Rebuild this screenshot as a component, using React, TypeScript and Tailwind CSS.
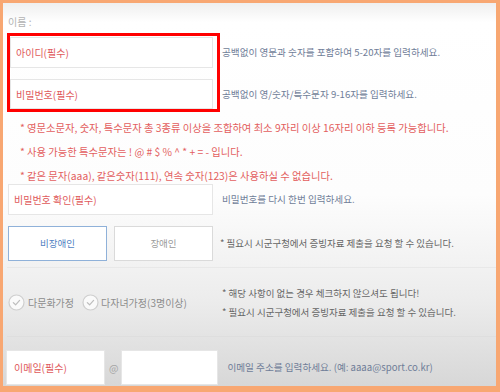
const font = "font-['Noto_Sans_CJK_KR','Noto_Sans',sans-serif]";

function CheckCircle() {
  return (
    <svg width="17" height="17" viewBox="0 0 17 17" className="shrink-0">
      <circle cx="8.5" cy="8.5" r="7.5" fill="#fafafa" stroke="#cfcfcf" strokeWidth="1.2" />
      <path d="M5.3 8.6 L7.6 10.8 L11.6 6.4" fill="none" stroke="#bdbdbd" strokeWidth="1.2" strokeLinecap="round" strokeLinejoin="round" />
    </svg>
  );
}

function Field({ label, className }: { label?: string; className: string }) {
  return (
    <div className={`flex items-center bg-white border border-[#e6e6e6] pl-[5px] ${className}`}>
      {label && <span className="text-[10px] text-[#e0595b]">{label}</span>}
    </div>
  );
}

export default function App() {
  return (
    <div className={`w-[500px] h-[392px] bg-[#f8a772] pt-[3px] pl-[3px] pr-[4px] pb-[6px] ${font}`}>
      <div className="h-full overflow-hidden bg-[linear-gradient(to_bottom,#efefef_0%,#ffffff_5%,#fdfdfd_50%,#ececec_78%,#d7d7d7_100%)] pl-[4px]">
        {/* name label */}
        <div className="pt-[13px] h-[30px] text-[10px] leading-[12px] text-[#b3b3b3] pl-[1px]">이름 :</div>

        {/* id / password, boxed in red */}
        <div className="flex">
          <div className="w-[213px] border-[3px] border-[#ff0000] pt-[1px] pr-[4px] flex flex-col gap-[11px]">
            <Field label="아이디(필수)" className="h-[31px]" />
            <Field label="비밀번호(필수)" className="h-[30px]" />
          </div>
          <div className="ml-[2px] pt-[4px] flex flex-col gap-[11px] text-[9.6px] text-[#6f7d98]">
            <div className="h-[31px] flex items-center">공백없이 영문과 숫자를 포함하여 5-20자를 입력하세요.</div>
            <div className="h-[30px] flex items-center">공백없이 영/숫자/특수문자 9-16자를 입력하세요.</div>
          </div>
        </div>

        {/* password rules */}
        <div className="mt-[10px] pl-[13px] flex flex-col gap-[12px] text-[10.3px] leading-[12px] text-[#e35f60]">
          <div>* 영문소문자, 숫자, 특수문자 총 3종류 이상을 조합하여 최소 9자리 이상 16자리 이하 등록 가능합니다.</div>
          <div>* 사용 가능한 특수문자는 ! @ # $ % ^ * + = - 입니다.</div>
          <div>* 같은 문자(aaa), 같은숫자(111), 연속 숫자(123)은 사용하실 수 없습니다.</div>
        </div>

        {/* password confirm */}
        <div className="mt-[2px] flex items-center">
          <Field label="비밀번호 확인(필수)" className="ml-[1px] w-[205px] h-[31px]" />
          <div className="ml-[9px] text-[9.6px] text-[#6f7d98]">비밀번호를 다시 한번 입력하세요.</div>
        </div>

        {/* disability */}
        <div className="mt-[11px] flex items-center">
          <div className="ml-[1px] w-[99px] h-[35px] border border-[#8fb1d9] bg-white flex items-center justify-center text-[9.5px] text-[#4f7fc2]">비장애인</div>
          <div className="ml-[7px] w-[99px] h-[35px] border border-[#dadada] bg-white flex items-center justify-center text-[9.5px] text-[#9a9a9a]">장애인</div>
          <div className="ml-[7px] text-[9.5px] text-[#666]">* 필요시 시군구청에서 증빙자료 제출을 요청 할 수 있습니다.</div>
        </div>

        <div className="mt-[6px] h-px bg-[#e8e8e8]" />

        {/* family options */}
        <div className="h-[68px] flex items-center">
          <div className="ml-[1px] w-[213px] flex items-center">
            <CheckCircle />
            <span className="ml-[3px] text-[10px] text-[#8c8c8c]">다문화가정</span>
            <span className="ml-[8px]"><CheckCircle /></span>
            <span className="ml-[2px] text-[10px] text-[#8c8c8c]">다자녀가정(3명이상)</span>
          </div>
          <div className="ml-[1px] flex flex-col gap-[7px] text-[9.5px] leading-[12px] text-[#666]">
            <div>* 해당 사항이 없는 경우 체크하지 않으셔도 됩니다!</div>
            <div>* 필요시 시군구청에서 증빙자료 제출을 요청 할 수 있습니다.</div>
          </div>
        </div>

        <div className="h-px bg-[#dedede]" />

        {/* email */}
        <div className="mt-[13px] flex items-center">
          <Field label="이메일(필수)" className="ml-[-1px] w-[99px] h-[35px] !pl-[7px]" />
          <span className="ml-[4px] text-[10px] text-[#a5a5a5]">@</span>
          <Field className="ml-[3px] w-[97px] h-[35px]" />
          <div className="ml-[9px] text-[9.6px] text-[#6f7d98]">이메일 주소를 입력하세요. (예: aaaa@sport.co.kr)</div>
        </div>
      </div>
    </div>
  );
}
